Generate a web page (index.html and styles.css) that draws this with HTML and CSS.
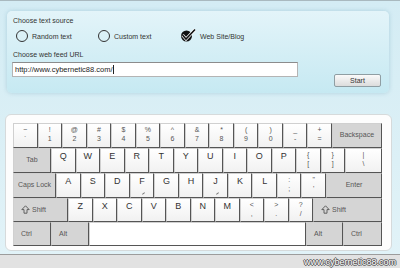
FILE: index.html
```
<!DOCTYPE html>
<html>
<head lang="en">
    <meta charset="UTF-8">
    <title>Typing trainer</title>
    <link rel="stylesheet" href="styles.css">
</head>
<body>
<div class="screen">
    <div class="source">
        <div class="label">Choose text source</div>
        <div class="options">
            <div class="option"><span class="radio"></span>Random text</div>
            <div class="option"><span class="radio"></span>Custom text</div>
            <div class="option">
                <svg class="tick" width="16" height="14" viewBox="0 0 16 14">
                    <circle cx="6.5" cy="8" r="5.5" fill="#111"/>
                    <path d="M2.5 7 L6 11 L15 1.5" fill="none" stroke="#fff" stroke-width="3"/>
                    <path d="M2.5 7 L6 11 L15 1.5" fill="none" stroke="#111" stroke-width="1.6"/>
                </svg>Web Site/Blog
            </div>
        </div>
        <div class="label">Choose web feed URL</div>
        <div class="url-row">
            <div class="url">http://www.cybernetic88.com/<span class="caret"></span></div>
            <div class="start">Start</div>
        </div>
    </div>

    <div class="keyboard">
        <div class="row">
            <div class="key dual"><span>~</span><span>`</span></div>
            <div class="key dual"><span>!</span><span>1</span></div>
            <div class="key dual"><span>@</span><span>2</span></div>
            <div class="key dual"><span>#</span><span>3</span></div>
            <div class="key dual"><span>$</span><span>4</span></div>
            <div class="key dual"><span>%</span><span>5</span></div>
            <div class="key dual"><span>^</span><span>6</span></div>
            <div class="key dual"><span>&amp;</span><span>7</span></div>
            <div class="key dual"><span>*</span><span>8</span></div>
            <div class="key dual"><span>(</span><span>9</span></div>
            <div class="key dual"><span>)</span><span>0</span></div>
            <div class="key dual"><span>_</span><span>-</span></div>
            <div class="key dual"><span>+</span><span>=</span></div>
            <div class="key mod center backspace">Backspace</div>
        </div>
        <div class="row">
            <div class="key mod center tab">Tab</div>
            <div class="key">Q</div>
            <div class="key">W</div>
            <div class="key">E</div>
            <div class="key">R</div>
            <div class="key">T</div>
            <div class="key">Y</div>
            <div class="key">U</div>
            <div class="key">I</div>
            <div class="key">O</div>
            <div class="key">P</div>
            <div class="key dual"><span>{</span><span>[</span></div>
            <div class="key dual"><span>}</span><span>]</span></div>
            <div class="key dual pipe"><span>|</span><span>\</span></div>
        </div>
        <div class="row">
            <div class="key mod center caps">Caps Lock</div>
            <div class="key">A</div>
            <div class="key">S</div>
            <div class="key">D</div>
            <div class="key bump">F</div>
            <div class="key">G</div>
            <div class="key">H</div>
            <div class="key bump">J</div>
            <div class="key">K</div>
            <div class="key">L</div>
            <div class="key dual"><span>:</span><span>;</span></div>
            <div class="key dual"><span>"</span><span>'</span></div>
            <div class="key mod center enter">Enter</div>
        </div>
        <div class="row short">
            <div class="key mod shift-l"><svg class="arrow" width="9" height="9" viewBox="0 0 9 9"><path d="M4.5 0.8 L8.2 4.6 H6 V8.2 H3 V4.6 H0.8 Z" fill="none" stroke="#555" stroke-width="0.9"/></svg>Shift</div>
            <div class="key">Z</div>
            <div class="key">X</div>
            <div class="key">C</div>
            <div class="key">V</div>
            <div class="key">B</div>
            <div class="key">N</div>
            <div class="key">M</div>
            <div class="key dual"><span>&lt;</span><span>,</span></div>
            <div class="key dual"><span>&gt;</span><span>.</span></div>
            <div class="key dual"><span>?</span><span>/</span></div>
            <div class="key mod shift-r"><svg class="arrow" width="9" height="9" viewBox="0 0 9 9"><path d="M4.5 0.8 L8.2 4.6 H6 V8.2 H3 V4.6 H0.8 Z" fill="none" stroke="#555" stroke-width="0.9"/></svg>Shift</div>
        </div>
        <div class="row short">
            <div class="key mod ctrl-l">Ctrl</div>
            <div class="key mod alt-l">Alt</div>
            <div class="key space"></div>
            <div class="key mod alt-r">Alt</div>
            <div class="key mod ctrl-r">Ctrl</div>
        </div>
    </div>

    <div class="footer"><span class="mark">www.cybernetic88.com</span></div>
</div>
</body>
</html>
```

FILE: styles.css
```
*{
    margin: 0;
    padding: 0;
    box-sizing: border-box;
}
body {
    width: 400px;
    height: 268px;
    overflow: hidden;
    font-family: "Liberation Sans", Arial, sans-serif;
    color: #333;
}
.screen {
    height: 268px;
    display: flex;
    flex-direction: column;
    border-top: 1px solid #a9b9bf;
    background: linear-gradient(#d4ecf4, #dcf0f6 60%, #e2f3f8);
}

/* top panel */
.source {
    margin: 10px 11px 0 7px;
    height: 82px;
    padding: 5px 8px 0 5px;
    border-radius: 5px;
    background: linear-gradient(#e3f4f9, #c6e9f2);
    box-shadow: 0 0 4px rgba(120, 170, 190, 0.45);
}
.label {
    font-size: 7px;
    line-height: 9px;
    margin-left: 1px;
}
.options {
    display: flex;
    height: 12px;
    margin: 5px 0 8px 4px;
}
.option {
    width: 82px;
    display: flex;
    align-items: center;
    font-size: 7px;
}
.radio {
    width: 12px;
    height: 12px;
    border: 1.5px solid #333;
    border-radius: 50%;
    margin-right: 4px;
}
.tick {
    margin: -2px 4px 0 0;
}
.url-row {
    display: flex;
    margin-top: 3px;
}
.url {
    width: 286px;
    height: 15px;
    background: #fff;
    border: 1px solid #b4b4b4;
    border-top-color: #8c8c8c;
    font-size: 7.5px;
    line-height: 13px;
    padding-left: 2px;
    color: #222;
}
.caret {
    display: inline-block;
    width: 1px;
    height: 9px;
    background: #222;
    vertical-align: -2px;
}
.start {
    margin: 12px 0 0 auto;
    width: 47px;
    height: 13px;
    border: 1px solid #8f9ea3;
    border-radius: 2px;
    background: linear-gradient(#fafafa, #dcdcdc);
    font-size: 7px;
    line-height: 11px;
    text-align: center;
}

/* keyboard */
.keyboard {
    margin: 21px 8px 0 5px;
    height: 137px;
    padding: 8px 9px 6px 7px;
    background: #fdfdfd;
    border: 1px solid #d6dadb;
    border-radius: 6px;
}
.row {
    display: flex;
    height: 25px;
}
.row.short {
    height: 24px;
}
.key {
    flex: 1;
    position: relative;
    border: 1px solid #555;
    border-left-color: #d0d0d0;
    border-top-color: #d0d0d0;
    background: linear-gradient(#fff, #f1f1f1);
    font-size: 9px;
    line-height: 10px;
    text-align: center;
    padding-top: 2px;
    color: #333;
}
.key.dual {
    display: flex;
    flex-direction: column;
    align-items: center;
    font-size: 7px;
    line-height: 9px;
    padding-top: 1px;
    color: #555;
}
.key.bump::after {
    content: "";
    position: absolute;
    left: 50%;
    bottom: 3px;
    width: 3px;
    height: 1px;
    background: #777;
    transform: rotate(-35deg);
}
.key.mod {
    background: #d5d5d5;
    color: #555;
    font-size: 7px;
    padding: 0 0 1px 7px;
    display: flex;
    align-items: center;
    text-align: left;
}
.key.center {
    justify-content: center;
    padding-left: 0;
}
.key.space {
    background: #fff;
}
.arrow {
    margin-right: 2px;
}
.backspace { flex: 0 0 50px; }
.tab { flex: 0 0 38px; }
.pipe { flex: 0 0 37px; }
.caps { flex: 0 0 43px; }
.enter { flex: 0 0 56px; }
.shift-l { flex: 0 0 55px; }
.shift-r { flex: 0 0 69px; }
.ctrl-l { flex: 0 0 38px; }
.alt-l { flex: 0 0 38px; }
.alt-r { flex: 0 0 37px; }
.ctrl-r { flex: 0 0 39px; }

/* footer strip */
.footer {
    margin-top: auto;
    height: 14px;
    border-top: 1px solid #9c9c9c;
    background: #e2e2e2;
    text-align: right;
    padding: 2px 4px 0 0;
    font-size: 9px;
    line-height: 10px;
}
.mark {
    color: #fff;
    text-shadow: 1px 0 0 #555, -1px 0 0 #555, 0 1px 0 #555, 0 -1px 0 #555;
}
```
